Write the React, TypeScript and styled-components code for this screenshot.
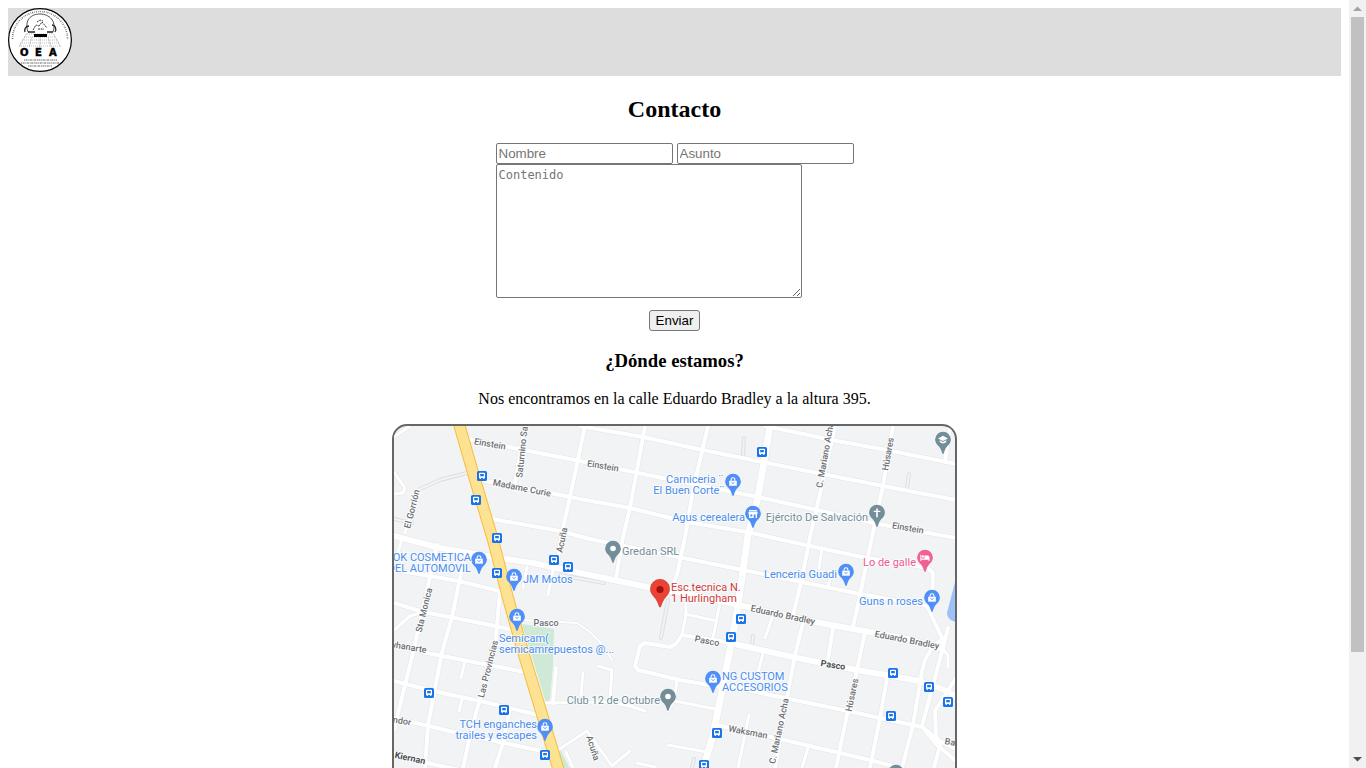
import React from "react";
import styled, { createGlobalStyle } from "styled-components";

const GlobalStyle = createGlobalStyle`
  body { margin: 0; background: #fff; color: #000; font-family: "Liberation Serif", serif; font-size: 16px; }
`;

const Shell = styled.div`
  display: flex;
  height: 100vh;
  overflow: hidden;
`;
const Page = styled.div`
  flex: 1;
  min-width: 0;
  overflow: hidden;
  padding: 8px;
`;
const Header = styled.header`
  height: 68px;
  background: #ddd;
`;
const Logo = styled.svg`
  display: block;
  width: 64px;
  height: 64px;
`;
const Main = styled.main`
  display: flex;
  flex-direction: column;
  align-items: center;
`;
const Title = styled.h2`
  margin: 20px 0;
  font-size: 24px;
  line-height: 27px;
`;
const Subtitle = styled.h3`
  margin: 19px 0;
  line-height: 21px;
`;
const Text = styled.p`
  margin: 0 0 16px;
  line-height: 18px;
`;
const Form = styled.form`
  display: flex;
  flex-direction: column;
  align-items: flex-start;
`;
const Fields = styled.div`
  display: flex;
  gap: 4px;
`;
const Field = styled.input`
  box-sizing: border-box;
  width: 177px;
  height: 21px;
  padding: 1px 2px;
  border: 1px solid #767676;
  border-radius: 2px;
  font-family: "Liberation Sans", sans-serif;
  &::placeholder { color: #757575; }
`;
const Message = styled.textarea`
  box-sizing: border-box;
  width: 306px;
  height: 134px;
  padding: 2px;
  border: 1px solid #767676;
  border-radius: 2px;
  font-family: "DejaVu Sans Mono", monospace;
  font-size: 12px;
  line-height: 16px;
  &::placeholder { color: #757575; }
`;
const Submit = styled.button`
  align-self: center;
  height: 21px;
  margin-top: 12px;
  padding: 0 6px;
  border: 1px solid #767676;
  border-radius: 3px;
  background: #efefef;
  color: #000;
  font-family: "Liberation Sans", sans-serif;
`;
const MapFrame = styled.div`
  box-sizing: border-box;
  width: 565px;
  max-width: 100%;
  height: 444px;
  overflow: hidden;
  border: 2px solid #666;
  border-radius: 15px;
  background: #f1f3f4;
`;
const MapDrawing = styled.svg`
  display: block;
  width: 561px;
  height: 440px;
  font-family: Roboto, sans-serif;
`;
const StreetName = styled.text<{ $main?: boolean }>`
  fill: ${(p) => (p.$main ? "#4c5054" : "#6a6e72")};
  font-size: 9px;
  font-weight: ${(p) => (p.$main ? 700 : 500)};
  paint-order: stroke;
  stroke: #fff;
  stroke-width: 2px;
  stroke-opacity: 0.8;
  dominant-baseline: central;
`;
const PlaceName = styled.text`
  font-size: 11px;
  paint-order: stroke;
  stroke: #fff;
  stroke-width: 2px;
  stroke-opacity: 0.7;
`;
const Scrollbar = styled.div`
  display: flex;
  flex-direction: column;
  width: 17px;
  background: #f1f1f1;
`;
const Arrow = styled.svg`
  display: block;
  width: 17px;
  height: 17px;
`;
const Track = styled.div`
  flex: 1;
  padding: 0 2px;
`;
const Thumb = styled.div`
  height: 86.5%;
  background: #c1c1c1;
`;

type Road = [string, number];
const roads: Road[] = [
  ["468,439 590,463 638,473 758,497 817,510 873,523 956,538", 4],
  ["580,426 643,437 703,450 762,462 883,486 956,500", 4],
  ["765,426 837,441 887,450 956,464", 4],
  ["480,480 550,493 580,499 630,508 687,522 747,532 810,546 867,558 928,568 933,573 932,600", 4],
  ["492,519 560,531 590,539 683,558 743,570 802,582 860,594 927,606 943,640", 4],
  ["394,570 430,576 458,581 500,591 495,648 480,698 470,736 463,768", 4],
  ["394,603 423,612 450,617 495,626 518,631", 4],
  ["394,643 427,653 525,672", 4],
  ["394,681 433,691 480,701 538,715", 4],
  ["394,718 437,728 470,736 547,752", 4],
  ["394,753 427,763 460,770", 4],
  ["730,643 720,641 682,635 676,644 670,647 645,643 640,646 635,666 638,670 680,680 720,687", 4],
  ["722,684 770,695 843,710 880,718 922,727 940,741 956,749", 4],
  ["717,725 780,739 840,753 870,760 900,768", 4],
  ["675,701 715,709", 3],
  ["668,745 707,752", 3],
  ["685,614 717,621", 3],
  ["686,594 686,614 682,635", 3],
  ["720,602 713,638", 3],
  ["708,426 693,490 685,537 677,575 670,592", 4],
  ["645,426 630,508 623,537 616,578", 4],
  ["585,426 570,497 562,532 557,565", 4],
  ["525,426 515,483", 4],
  ["835,426 817,507 810,537 801,583 793,615", 4],
  ["803,623 795,655 787,698 775,768", 4],
  ["893,426 883,486 872,537 860,595 853,627", 4],
  ["865,632 857,670 847,715 836,768", 4],
  ["833,628 828,660", 4],
  ["887,678 880,718 870,768", 4],
  ["943,638 932,648 925,660 922,671 913,725 902,768", 4],
  ["948,628 943,648 933,685 922,726 937,745 956,761", 4],
  ["943,638 940,646 948,655 948,668", 3],
  ["956,678 935,711 936,735 940,745 934,768", 4],
  ["822,548 819,568", 3],
  ["830,580 828,586", 3],
  ["950,426 945,462", 4],
  ["402,538 397,557", 3],
  ["405,533 418,490", 3],
  ["437,545 427,590 413,653 405,685 394,730", 4],
  ["462,568 452,617 442,652 428,725 425,768", 4],
  ["394,630 410,616 420,613", 3],
  ["510,708 503,743 495,768", 4],
  ["465,661 461,678", 3],
  ["462,700 459,711", 3],
  ["556,668 553,703", 4],
  ["545,703 610,702 630,706 645,711", 3],
  ["583,673 581,695", 3],
  ["598,666 612,670 610,698", 3],
  ["520,620 577,623 590,632 600,642 612,660", 2],
  ["527,567 523,588", 3],
  ["553,570 548,595", 3],
  ["394,437 410,426", 3],
  ["394,472 405,488 403,493 394,494", 3],
  ["558,750 587,731 612,766 630,751", 3],
  ["637,763 655,767", 3],
  ["566,752 574,770", 3],
  ["749,715 738,768", 3],
  ["763,653 758,673", 3],
  ["677,680 674,701 668,711", 3],
  ["808,748 802,768", 3],
  ["772,618 765,638", 3],
  ["394,536 440,548 493,557 533,563 590,575 647,587 693,595 743,606 815,622 853,629 903,638 940,648", 6],
  ["730,643 797,658 857,670 920,681 947,691 958,699", 6],
  ["770,426 758,497 748,535 737,612 722,691 713,735 703,770", 7],
];
const lanes = [
  "420,489 440,480 467,473",
  "743,455 744,438",
  "907,488 909,474",
  "668,600 661,638",
  "394,519 412,523",
  "560,575 604,583",
  "752,645 753,636",
  "692,768 694,759",
];

const highway = "459,424 476,483 493,540 508,598 524,655 541,711 558,768 570,808";

type Street = [string, number, number, number, boolean?];
const streets: Street[] = [
  ["Einstein", 490, 444, 10],
  ["Einstein", 603, 466, 10],
  ["Einstein", 908, 528, 10],
  ["Madame Curie", 522, 488, 11],
  ["Saturnino Sa", 522, 452, -84],
  ["El Gorrión", 412, 509, -76],
  ["Acuña", 562, 540, -78],
  ["C. Mariano Acha", 825, 455, -80],
  ["Húsares", 888, 454, -80],
  ["Sta Monica", 424, 610, -76],
  ["Pasco", 546, 623, 0],
  ["Pasco", 707, 641, 11],
  ["Pasco", 833, 665, 9, true],
  ["Eduardo Bradley", 783, 615, 12],
  ["Eduardo Bradley", 907, 640, 11],
  ["whanarte", 408, 647, 9],
  ["Las Provincias", 488, 669, -76],
  ["ndor", 402, 721, 9],
  ["Kiernan", 410, 758, 12, true],
  ["Acuña", 593, 748, 72],
  ["Waksman", 748, 732, 11],
  ["C. Mariano Acha", 779, 731, -78],
  ["Húsares", 852, 695, -78],
  ["Ba", 950, 742, 10],
];

type Place = [string, number, number, string, "start" | "middle" | "end"];
const blue = "#4b8df0";
const slate = "#748e99";
const places: Place[] = [
  ["Carniceria ¨", 723, 483, blue, "end"],
  ["El Buen Corte¨", 724, 494, blue, "end"],
  ["Agus cerealera", 745, 521, blue, "end"],
  ["Ejército De Salvación", 868, 521, slate, "end"],
  ["Gredan SRL", 622, 555, slate, "start"],
  ["OK COSMETICA", 471, 561, blue, "end"],
  ["DEL AUTOMOVIL", 471, 572, blue, "end"],
  ["JM Motos", 523, 583, blue, "start"],
  ["Lo de galle", 916, 566, "#ee5b91", "end"],
  ["Lenceria Guadi", 837, 578, blue, "end"],
  ["Guns n roses", 923, 605, blue, "end"],
  ["Esc.tecnica N.", 671, 591, "#cf3a3c", "start"],
  ["1 Hurlingham", 671, 602, "#cf3a3c", "start"],
  ["Semicam(", 499, 642, blue, "start"],
  ["semicamrepuestos @...", 499, 653, blue, "start"],
  ["NG CUSTOM", 722, 680, blue, "start"],
  ["ACCESORIOS", 722, 691, blue, "start"],
  ["Club 12 de Octubre", 660, 704, slate, "end"],
  ["TCH enganches", 537, 728, blue, "end"],
  ["trailes y escapes", 537, 739, blue, "end"],
];

const stops = [
  [762, 452], [482, 476], [476, 500], [497, 538], [554, 560], [568, 567], [497, 573],
  [741, 619], [731, 637], [893, 673], [929, 687], [948, 702], [891, 716], [429, 693],
  [504, 710], [545, 755], [717, 733], [704, 765],
];

type PinKind = "bag" | "store" | "cross" | "dot" | "bed" | "school";
const pins: [number, number, PinKind][] = [
  [733, 482, "bag"], [753, 514, "store"], [877, 513, "cross"], [943, 440, "school"],
  [613, 549, "dot"], [479, 560, "bag"], [514, 577, "bag"], [925, 558, "bed"],
  [846, 572, "bag"], [932, 598, "bag"], [517, 617, "bag"], [713, 679, "bag"],
  [668, 697, "dot"], [545, 727, "bag"], [896, 773, "dot"],
];
const pinColor: Record<PinKind, string> = {
  bag: "#4f8ff7", store: "#4f8ff7", cross: slate, dot: slate, bed: "#f06292", school: slate,
};

function Pin({ x, y, kind }: { x: number; y: number; kind: PinKind }) {
  return (
    <g transform={`translate(${x} ${y})`}>
      <path
        d="M0-8.2A7.9 7.9 0 0 1 7.9-.5C7.9 2.5 6 4.5 4 6.5 2 8.8 1.6 11 .6 13.6Q0 14.6-.6 13.6C-1.6 11-2 8.8-4 6.5-6 4.5-7.9 2.5-7.9-.5A7.9 7.9 0 0 1 0-8.2Z"
        fill={pinColor[kind]}
      />
      {kind === "bag" && (
        <>
          <path d="M-3.8-1.3h7.6v5h-7.6z" fill="#fff" />
          <path d="M-1.9-1.3v-1a1.9 1.9 0 0 1 3.8 0v1" fill="none" stroke="#fff" strokeWidth="1.1" />
          <path d="M-1.6.3q1.6 2.5 3.2 0" fill="none" stroke="#4f8ff7" strokeWidth=".9" />
        </>
      )}
      {kind === "store" && (
        <path fillRule="evenodd" d="M-4-4h8v1.2h-8zM-4.5-2.2h9v2.5H4V4H2.6V.5H.7V4H-4V.3h-.5zM-2.7.5v2.1h2V.5z" fill="#fff" />
      )}
      {kind === "cross" && <path d="M-.8-4.5H.8v2.2h2.5v1.4H.8v5.2H-.8V-.9h-2.5v-1.4h2.5z" fill="#fff" />}
      {kind === "dot" && <circle cy="-.5" r="2.8" fill="#fff" />}
      {kind === "bed" && (
        <path d="M-4.7-3.3h1v3.8h3.2v-3h3a2 2 0 0 1 2 2v3.4h-1V1.7h-7.2v1.2h-1zM-3.2-1.2a1.2 1.2 0 1 1 2.2.3 1.2 1.2 0 0 1-2.2-.3z" fill="#fff" />
      )}
      {kind === "school" && <path d="M0-4.2 5-1.6 0 1-5-1.6zM-3.3.2 0 2 3.3.2v1.9Q0 5-3.3 2.1z" fill="#fff" />}
    </g>
  );
}

function BusStop({ x, y }: { x: number; y: number }) {
  return (
    <g transform={`translate(${x} ${y})`}>
      <rect x="-5" y="-5" width="10" height="10" rx="1.6" fill="#1a73e8" />
      <path fillRule="evenodd" d="M-2.2-3.2h4.4q.8 0 .8.8v4.3h-.7v1.2H1.1V2.1h-2.2v1H-2.3V1.9H-3v-4.3q0-.8.8-.8zM-1.8-2v2.200h3.600V-2z" fill="#fff" />
    </g>
  );
}

function LocationMap() {
  return (
    <MapDrawing viewBox="394 426 561 440" role="img" aria-label="Mapa de la escuela">
      <path d="M522 624 554 629 553 665 550 699 546 703ZM556 750l4-1 13 26h-9z" fill="#ceead6" />
      <path d="M956 578 947 613Q947 620 956 622Z" fill="#9cc0f9" />
      <g fill="none" strokeLinecap="round" strokeLinejoin="round">
        {lanes.map((points) => (
          <polyline key={points} points={points} stroke="#dcdfe2" strokeWidth={4} />
        ))}
        {lanes.map((points) => (
          <polyline key={points} points={points} stroke="#f1f3f4" strokeWidth={2} />
        ))}
        {roads.map(([points, width]) => (
          <polyline key={points} points={points} stroke="#e3e5e8" strokeWidth={width + 1} />
        ))}
        {roads.map(([points, width]) => (
          <polyline key={points} points={points} stroke="#fff" strokeWidth={width} />
        ))}
        <polyline points={highway} stroke="#f8bd3c" strokeWidth={12} />
        <polyline points={highway} stroke="#fde293" strokeWidth={10} />
      </g>
      {streets.map(([name, x, y, angle, main]) => (
        <StreetName key={`${name}${x}`} $main={main} textAnchor="middle" transform={`translate(${x} ${y}) rotate(${angle})`}>
          {name}
        </StreetName>
      ))}
      {stops.map(([x, y]) => <BusStop key={`${x}-${y}`} x={x} y={y} />)}
      {pins.map(([x, y, kind]) => <Pin key={`${x}-${y}`} x={x} y={y} kind={kind} />)}
      <path
        d="M660 579.3a9.6 9.6 0 0 1 9.6 9.6c0 3.2-1.5 5.4-3.8 8-2.8 3.2-3.9 6-5 9.6q-.8 1.5-1.6 0c-1-3.6-2.2-6.4-5-9.6-2.3-2.6-3.8-4.8-3.8-8a9.6 9.6 0 0 1 9.6-9.6Z"
        fill="#ea4335" stroke="#c5372c" strokeWidth=".6"
      />
      <circle cx="660" cy="589.5" r="3.6" fill="#a50e0e" />
      {places.map(([name, x, y, color, anchor]) => (
        <PlaceName key={name} x={x} y={y} fill={color} textAnchor={anchor}>{name}</PlaceName>
      ))}
    </MapDrawing>
  );
}

function SchoolLogo() {
  return (
    <Logo viewBox="0 0 64 64" role="img" aria-label="OEA">
      <circle cx="32" cy="32" r="31.4" fill="#fff" stroke="#000" strokeWidth="1.2" />
      <g fill="none" stroke="#222">
        <path d="M4.500 31A27.500 27.500 0 0 1 59.500 31" strokeWidth="1.600" strokeDasharray="1 1.300 .6 1" opacity=".65" />
        <path d="M20 24C16 12 23 6 32 6s17 7 13 18" strokeWidth=".8" />
        <path d="M17 24c-1-3 1-6 4-6M47 24c2-3 0-7-3-7M20 24h7M39 24h6" strokeWidth="1.3" />
        <path d="m25 22 3-5 3 1 3-4 5 6M29 14l3-2 3 1M30 21h6" strokeWidth=".9" strokeDasharray="2 .7" />
        <path d="M19 26h26M16 29h32M14 32h36M12 35h40M11 38h42" strokeWidth=".6" strokeDasharray="1 1" opacity=".5" />
        <path d="M19 25 11 39M45 25l8 14M24 29l-3 10M32 29v10M40 29l3 10" strokeWidth=".4" opacity=".5" />
        <path d="M16 52h33M13 55h38M20 58h24" strokeWidth="1" strokeDasharray="1 .6 2 .7" opacity=".7" />
      </g>
      <path d="M26 26h13v3H26z" />
      <text x="12 27 41" y="48" fontFamily="DejaVu Sans, sans-serif" fontSize="10" fontWeight="700" stroke="#000" strokeWidth=".5">OEA</text>
    </Logo>
  );
}

export default function App() {
  return (
    <>
      <GlobalStyle />
      <Shell>
        <Page>
          <Header><SchoolLogo /></Header>
          <Main>
            <Title>Contacto</Title>
            <Form onSubmit={(e) => e.preventDefault()}>
              <Fields>
                <Field type="text" name="nombre" placeholder="Nombre" aria-label="Nombre" />
                <Field type="text" name="asunto" placeholder="Asunto" aria-label="Asunto" />
              </Fields>
              <Message name="contenido" placeholder="Contenido" aria-label="Contenido" />
              <Submit type="submit">Enviar</Submit>
            </Form>
            <Subtitle>¿Dónde estamos?</Subtitle>
            <Text>Nos encontramos en la calle Eduardo Bradley a la altura 395.</Text>
            <MapFrame><LocationMap /></MapFrame>
          </Main>
        </Page>
        <Scrollbar aria-hidden="true">
          <Arrow viewBox="0 0 17 17"><path d="M4 11h9L8.500 6.500z" fill="#a3a3a3" /></Arrow>
          <Track><Thumb /></Track>
          <Arrow viewBox="0 0 17 17"><path d="M4 6h9L8.500 10.500z" fill="#505050" /></Arrow>
        </Scrollbar>
      </Shell>
    </>
  );
}
